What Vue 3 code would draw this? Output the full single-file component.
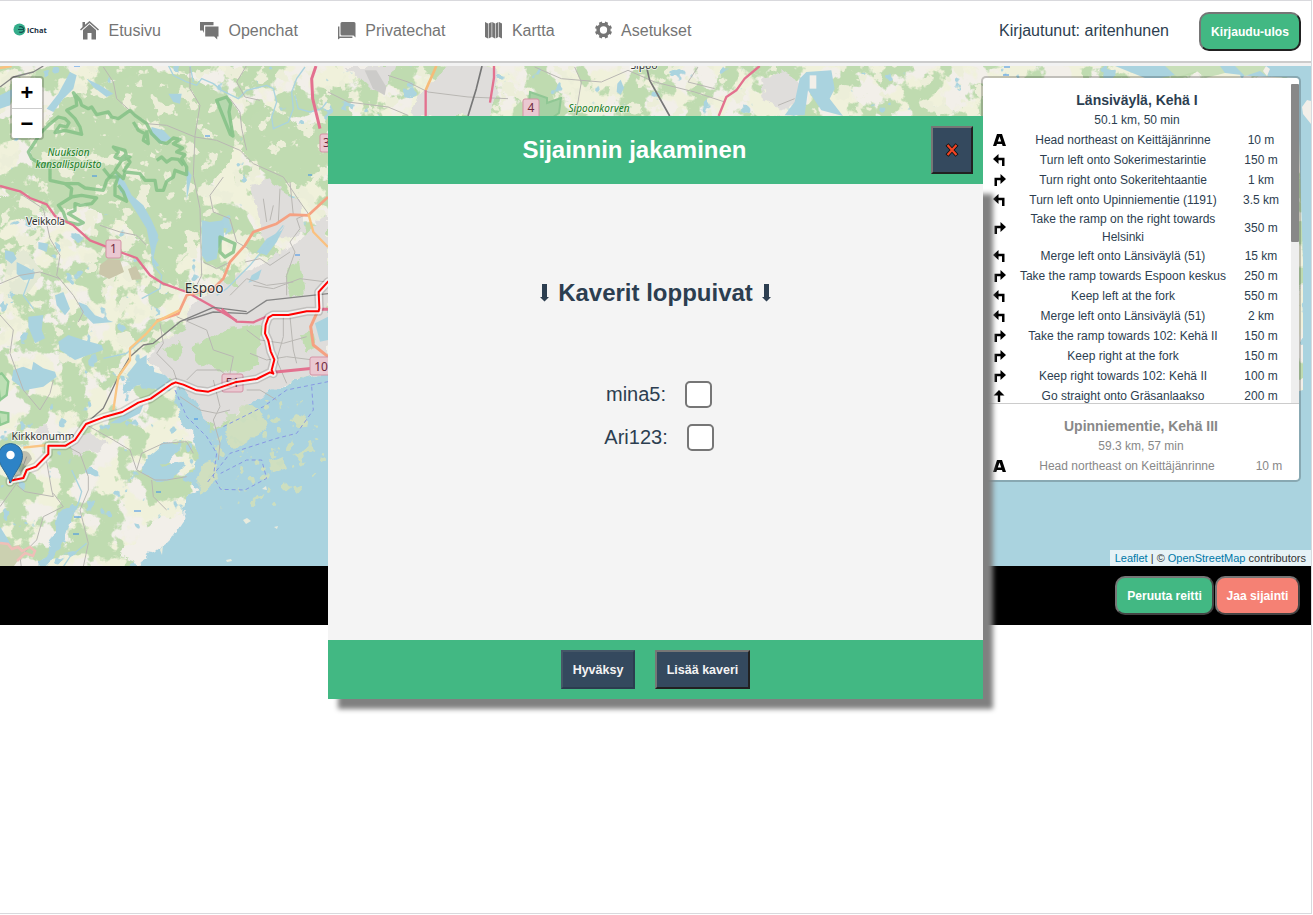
<script setup>
const steps = [
  ['A', 'Head northeast on Keittäjänrinne', '10 m'],
  ['left', 'Turn left onto Sokerimestarintie', '150 m'],
  ['right', 'Turn right onto Sokeritehtaantie', '1 km'],
  ['left', 'Turn left onto Upinniementie (1191)', '3.5 km'],
  ['right', 'Take the ramp on the right towards Helsinki', '350 m'],
  ['left', 'Merge left onto Länsiväylä (51)', '15 km'],
  ['right', 'Take the ramp towards Espoon keskus', '250 m'],
  ['left', 'Keep left at the fork', '550 m'],
  ['left', 'Merge left onto Länsiväylä (51)', '2 km'],
  ['right', 'Take the ramp towards 102: Kehä II', '150 m'],
  ['right', 'Keep right at the fork', '150 m'],
  ['right', 'Keep right towards 102: Kehä II', '100 m'],
  ['up', 'Go straight onto Gräsanlaakso', '200 m'],
]
const routes = [
  { title: 'Länsiväylä, Kehä I', info: '50.1 km, 50 min', steps },
  { title: 'Upinniementie, Kehä III', info: '59.3 km, 57 min', steps: steps.slice(0, 1) },
]
const glyphs = {
  A: 'M0 12 4 0h5L13 12H9.600L9 10H4L3.300 12ZM4.800 7.500h3.400L6.500 2.400Z',
  left: 'M0 5 5.500 0V3.700h6V12H9V6.300H5.500V10Z',
  right: 'M13 5 7.500 0V3.700h-6V12H4V6.300h3.500V10Z',
  up: 'M6 0l5.500 5.500H7.200V12H4.800V5.500H.500Z',
}
const routeLine = 'M30 517 30 512 70 504 80 480 108 470 145 432 145 407 197 407 225 390 258 342 310 322 367 306 415 278 452 266 515 222 527 217 550 224 590 241 625 245 705 217 770 207 810 187 820 191 815 180 823 149 812 124 805 92 795 70 797 45 805 23 818 15 865 15 920 4 956 4 958-6 956-54 984-85'
</script>

<template>
  <div class="page">
    <nav class="nav">
      <div class="logo">
        <svg width="13" height="13" viewBox="0 0 13 13">
          <circle cx="6.500" cy="6.500" r="6" fill="#35ad8b" />
          <path d="M6 4c2-1 4 0 5 2M6 9c2 1 5 0 5-2M5 6.500h6" stroke="#144d50" stroke-width="1.200" fill="none" />
        </svg>
        <span>iChat</span>
      </div>
      <a class="item">
        <svg width="19" height="19" viewBox="0 0 19 19"><path d="M9.500 0 19 8.500l-1 1L9.500 2 1 9.500l-1-1L2.500 6V1H5v2.800ZM9.500 3.300 16 9v9.500h-4.500V12h-4v6.500H3V9Z" /></svg>Etusivu</a>
      <a class="item">
        <svg width="19" height="19" viewBox="0 0 19 19"><path d="M0 1h13.500v3.300H4V12L2.800 9.500H0Z" /><path d="M5.200 5.500H18.500v10h-1.300V18.500l-3-3h-9Z" /></svg>Openchat</a>
      <a class="item">
        <svg width="19" height="19" viewBox="0 0 19 19"><path d="M5 1h12q1.500 0 1.500 1.500V16.500L16.500 14.500H5q-1.500 0-1.500-1.500V2.500Q3.500 1 5 1Z" /><path d="M1 5.500h1.400V15.500h13V17H3L1 18.500Z" /></svg>Privatechat</a>
      <a class="item map-item">
        <svg width="17" height="18" viewBox="0 0 17 18"><path d="m0 1 3 1.500v15L0 16Zm3.600 1.500L6.600 1v15L3.600 17.500ZM7.200 1 10 2.500v15L7.200 16Zm3.400 1.500L13.400 1v15l-2.800 1.500ZM14 1l3 1.500v15L14 16Z" /></svg>Kartta</a>
      <a class="item">
        <svg width="17" height="18" viewBox="0 0 20 20"><path fill-rule="evenodd" d="m8 0 .6 1.700h2.800L12 0l3.500 1.500-.7 1.700 2 2 1.700-.700L20 8l-1.700.600v2.800L20 12l-1.500 3.500-1.700-.700-2 2 .7 1.700L12 20l-.6-1.700H8.600L8 20l-3.500-1.500.7-1.700-2-2-1.700.700L0 12l1.700-.6V8.600L0 8l1.500-3.500 1.700.700 2-2-.7-1.700ZM10 5.700a4.300 4.300 0 1 0 0 8.600 4.300 4.300 0 0 0 0-8.600Z" /></svg>Asetukset</a>
      <span class="user">Kirjautunut: aritenhunen</span>
      <button class="round green">Kirjaudu-ulos</button>
    </nav>

    <section class="map">
      <svg class="tiles" width="1311" height="500" viewBox="0 66 1311 500">
        <defs>
          <filter id="forest" x="0" y="0" width="100%" height="100%" color-interpolation-filters="sRGB">
            <feTurbulence type="fractalNoise" baseFrequency=".034" numOctaves="5" seed="8" />
            <feColorMatrix values="0 0 0 0 .75  0 0 0 0 .86  0 0 0 0 .69  18 0 0 0 -8.600" />
            <feComposite in2="SourceGraphic" operator="in" />
          </filter>
          <filter id="clearings" x="0" y="0" width="100%" height="100%" color-interpolation-filters="sRGB">
            <feTurbulence type="fractalNoise" baseFrequency=".06" numOctaves="4" seed="31" />
            <feColorMatrix values="0 0 0 0 .925  0 0 0 0 .935  0 0 0 0 .85  0 20 0 0 -12" />
            <feComposite in2="SourceGraphic" operator="in" />
          </filter>
          <filter id="fields" x="0" y="0" width="100%" height="100%" color-interpolation-filters="sRGB">
            <feTurbulence type="fractalNoise" baseFrequency=".028" numOctaves="4" seed="21" />
            <feColorMatrix values="0 0 0 0 .94  0 0 0 0 .945  0 0 0 0 .86  0 16 0 0 -7.500" />
            <feComposite in2="SourceGraphic" operator="in" />
          </filter>
          <filter id="lakes" x="0" y="0" width="100%" height="100%" color-interpolation-filters="sRGB">
            <feTurbulence type="fractalNoise" baseFrequency=".06" numOctaves="3" seed="5" />
            <feColorMatrix values="0 0 0 0 .67  0 0 0 0 .83  0 0 0 0 .875  0 0 22 0 -15.500" />
            <feComposite in2="SourceGraphic" operator="in" />
          </filter>
          <filter id="rough" x="-5%" y="-5%" width="110%" height="110%">
            <feTurbulence type="fractalNoise" baseFrequency=".07" numOctaves="3" seed="3" />
            <feDisplacementMap in="SourceGraphic" scale="13" xChannelSelector="R" yChannelSelector="G" />
          </filter>
          <filter id="islands" x="0" y="0" width="100%" height="100%" color-interpolation-filters="sRGB">
            <feTurbulence type="fractalNoise" baseFrequency=".085" numOctaves="3" seed="14" />
            <feColorMatrix values="0 0 0 0 .8  0 0 0 0 .87  0 0 0 0 .75  22 0 0 0 -14" />
            <feComposite in2="SourceGraphic" operator="in" />
          </filter>
        </defs>
        <rect y="66" width="1311" height="500" fill="#f2efe9" />
        <rect y="66" width="1311" height="500" filter="url(#fields)" />
        <rect y="66" width="1311" height="500" filter="url(#forest)" />
        <rect y="66" width="1311" height="500" filter="url(#lakes)" />

        <!-- Forests around Nuuksio -->
        <g transform="translate(0 62) scale(.33333)" filter="url(#rough)" fill="#c0dbb1">
          <path d="M190 110 330 60 440 30 560 40 690 110 720 160 690 300 610 390 600 540 500 640 440 560 370 480 250 430 180 450 100 340 90 250Z" />
          <path d="M720 190 800 130 900 190 980 180 980 330 890 380 790 330 730 280Z" />
          <path d="M0 400 60 410 130 480 60 470 0 480Z" />
          <path d="M20 590 70 560 130 630 80 700 20 690Z" fill="#e3e8d4" />
        </g>
        <rect y="66" width="983" height="320" filter="url(#clearings)" />

        <!-- Built-up areas -->
        <g filter="url(#rough)" fill="#dfdddb">
          <path d="M190 308 215 285 250 270 285 250 328 215V372L300 376 270 397 240 410 214 428 195 410 178 385 150 360 158 345 185 330Z" />
          <path d="M250 185 270 180 300 200 305 230 265 240Z" />
          <path d="M65 438 90 430 108 445 75 458ZM30 430 45 425 55 435 40 440Z" />
          <path d="M345 66 395 66 388 85 370 90ZM448 66 497 66 492 116 410 116 420 95Z" />
          <path d="M760 80 790 70 805 90 785 110 765 100Z" />
        </g>
        <g filter="url(#rough)" fill="#c1ddb1">
          <path d="M190 350 220 330 260 325 258 365 240 374 200 365Z" />
          <path d="M220 280 235 270 238 288ZM285 275 300 260 305 295 292 300ZM165 350l12-8 5 15-10 5ZM300 335l12-6 4 16-12 4Z" />
        </g>
        <path d="m100 265 8-6 12 1 4 12-15 7-10-5ZM128 269l8-3 6 13-10 1Z" fill="#cac6aa" />

        <!-- Sea -->
        <g filter="url(#rough)">
          <path d="M120 586 136 553 155 533 180 520 188 495 199 490 185 480 198 460 193 435 185 428 178 408 173 393 183 387 196 402 211 430 225 425 238 418 245 408 264 395 282 390 301 376 345 368V600H120Z" fill="#aad3df" />
          <path d="M140 475 149 458 165 445 182 440 180 448 161 468 178 460 185 466 173 478 158 481ZM124 393 130 370 142 358 151 364 155 378 171 388 160 390 146 386Z" fill="#aad3df" />
          <path d="m40 566 14-32 5-20 12-12 5 4-7 17-11 25-11 25Z" fill="#aad3df" />
          <path d="M227 420 247 405 260 412 266 430 253 438 235 450 226 442ZM199 475 211 457 220 462 210 484 200 495ZM270 462l12-5 4 12-14 5ZM288 422l8-8 9 3-3 10Z" fill="#d0dfbf" />
          <path d="m120 555 26-28 25-12 15-2-18 27-28 22Z" fill="#f2efe9" />
        </g>
        <path d="M215 400h113v60l-40 45-88 5Z" filter="url(#islands)" />
        <g fill="#e8ebdd">
          <path d="m243 520 4-2 4 3-5 3ZM226 560l5-1 1 2-5 1ZM262 489l4-3 1 4ZM274 527l4-1-1 3ZM160 550l3-5-1 10Z" />
        </g>

        <!-- Lakes -->
        <g transform="translate(0 62) scale(.33333)" fill="#aad3df">
          <path d="M605 475 630 480 670 475 672 525 655 560 650 590 620 600 605 580Z" />
          <path d="M345 330 375 360 395 400 430 430 455 475 475 520 460 590 450 550 440 500 415 460 380 405 360 390Z" />
          <path d="M210 30 230 40 220 80 190 110 160 150 140 140 175 95ZM0 100 40 80 30 130 0 140Z" />
          <path d="M455 195 490 205 515 230 480 245 450 215ZM770 570 800 530 845 505 855 490 830 540 800 580ZM260 50 300 70 340 95 320 105 280 75Z" />
          <path d="M15 565 40 570 50 590 35 605 15 590ZM50 600 80 615 105 630 100 650 70 655 50 635ZM115 540 145 545 140 570 115 560ZM165 700 190 690 210 740 195 760 170 730ZM755 640l30-18-10 30-30 10ZM560 320l15 20-15 75Z" />
          <path d="M235 720 260 730 285 760 340 780 280 785 245 750ZM505 95l40 0-5 30-20-5Z" />
        </g>
        <g transform="translate(0 310) scale(.33333)" fill="#aad3df">
          <path d="M85 20 130 15 125 60 135 85 105 100 85 50ZM175 95 205 75 250 90 305 105 310 120 265 135 225 150 180 120ZM40 180 70 170 95 180 100 155 130 175 165 185 170 200 130 230 75 240 35 210Z" />
          <path d="M415 150 440 135 440 180 495 195 520 220 470 220 400 215 380 195ZM330 340 380 310 430 285 420 310 360 340ZM945 40 984 20V90L960 95ZM0 650 25 690 40 720 0 740Z" />
        </g>
        <g transform="translate(328 62) scale(.33333)">
          <path d="M1435 30 1510 25 1520 80 1505 110 1545 162 1480 145 1440 85 1430 160H1370L1400 120 1415 50Z" fill="#aad3df" />
          <path d="M1445 40h20v40h-20Z" fill="#f2efe9" />
          <path d="m868 65 10-12 10 25-10 20-12-8Z" fill="#aad3df" />
          <path d="m110 25 35 0 30 50 -5 25-35-20Z" fill="#cccbc9" />
        </g>
        <path d="M1115 66H1311V566H983V480l320-90V260L1297 78 1250 76 1200 70 1150 80Z" fill="#aad3df" />
        <path d="m1165 66 12 11 20-6 8 7 20-5-5-7ZM1235 66l10 10 15-5 8 6-3-11Z" fill="#c8dfb9" />
        <path d="m1302 107 5-7 4 1v23l-8-10ZM1263 71l3-5 4 3-3 7Z" fill="#f2efe9" />

        <!-- Streams and minor roads -->
        <g fill="none">
          <g transform="translate(0 62) scale(.33333)" stroke="#aad3df" stroke-width="4">
            <path d="M505 10 520 40 560 60 590 70 605 50 640 65 665 85 715 110 740 85 800 70 820 80 830 120 815 165 820 200 865 180 880 140 875 90 890 50 915 15M885 100 895 140 930 150 965 140 980 120" />
            <path d="M475 530 455 570 460 610 485 640 480 680 425 710M850 490 750 610 680 680 650 700M100 620 70 700 100 740M570 10 580 60" />
          </g>
          <g transform="translate(0 310) scale(.33333)" stroke="#aad3df" stroke-width="4">
            <path d="M215 480 245 545 235 580 205 640 175 720M310 145 380 130 435 80M260 700 210 740 190 770" />
          </g>
          <g transform="translate(0 62) scale(.33333)" stroke="#b9b7b3" stroke-width="3">
            <path d="M310 15 340 60 350 110 400 155 440 185 500 190 585 225 650 235 720 265 760 305 850 345 900 420 925 455M570 15 570 80 600 130 585 220 580 340 600 440 605 640 580 690M740 10 710 60 735 105 780 115M740 265 725 200 720 150 690 110M60 395 130 440 150 530 180 580 170 640 220 700 250 750 235 780M0 665 60 640 120 630 180 650M300 490 360 510 410 520 440 550" />
            <path d="M610 600 650 620 690 600M670 345 630 400 640 450 690 470 710 540 745 560M925 455 890 470 900 500 870 540 885 570 860 640 860 700M735 600 780 590 810 610 870 570M760 670 820 680 900 650 980 660M690 700 740 650 800 670 880 660M790 410 800 480M840 380 835 480M870 360 880 460M820 430 810 475" />
          </g>
          <g transform="translate(0 310) scale(.33333)" stroke="#b9b7b3" stroke-width="3">
            <path d="M0 15 40 60 30 130 70 240 120 300 150 250 160 210M140 455 155 540 160 560 75 545 50 525M160 550 190 590 130 620 110 690 60 740 65 780M185 400 240 430 265 500 265 540 240 600 265 700 250 770M260 345 340 390 390 420 410 480 465 510 500 510 560 500M410 480 425 430 490 400 560 395 580 430M480 40 490 100 470 130 520 180 540 240M530 20 620 60 640 120 700 140 690 190 720 220M850 20 850 80 830 150 860 220M640 210 660 290 640 330 660 400 655 450M0 590 50 520 80 440M455 510 460 560 500 600" />
            <path d="M560 210 590 180 660 180 700 215M540 260 600 300 650 310 690 300M740 240 780 240 830 270M750 130 800 150 860 140 940 150M740 60 780 90 850 100 920 80M870 20 880 120 890 160" />
          </g>
          <g transform="translate(328 62) scale(.33333)" stroke="#b9b7b3" stroke-width="3">
            <path d="M0 90 60 120 180 135 240 160M620 15 700 50 820 60 900 25 980 60 1100 90 1190 120M180 40 240 60 300 90 420 105 540 110M740 15 760 60 750 120 740 160M1350 130 1400 110M1110 15 1080 60 1160 80" />
          </g>
        </g>

        <!-- National park borders -->
        <g transform="translate(0 62) scale(.33333)" fill="none" stroke="#7fbf83" stroke-opacity=".8" stroke-width="10" stroke-linejoin="round">
          <path d="M85 270 105 240 120 215 145 190 175 165 195 170 207 182 200 195 180 190 165 212 195 205 245 217 240 195 225 170 200 145 230 130 228 110 220 92 240 115 245 130 265 140 275 135 290 158 325 150 335 165 355 170 390 145 405 160 440 185 455 215 480 240 500 245 520 228 540 232 520 245 548 258 530 270 555 278 545 290 560 315 560 338 525 325 520 345 500 358 490 385 470 385 465 355 435 355 420 335 375 330 370 350 345 328 320 355 310 385 255 378 235 365 195 365 150 355 150 310 120 305 95 290ZM195 365 215 380 212 405 245 400 290 408 275 425 240 430 225 425 225 445 205 455 250 482 235 488 200 480 190 450 175 430 215 405" />
          <path d="M345 325 365 295 390 285 375 280 360 292 345 285 355 270 340 255 375 265 380 285 390 300 370 330M470 295 485 285 500 300 515 290 535 292 550 310M400 180 415 205 435 215 430 235 445 245 440 205M310 320 330 345 355 345 345 370 345 400 380 418 370 390 355 370" />
          <path d="m650 115 30-10 12 20-5 25 12 72-8-5Z" fill="#b6d8ae" />
          <path d="m660 525 45 20-5 25-25 15-15-15Z" />
        </g>
        <g transform="translate(0 310) scale(.33333)" stroke="#8fca92" stroke-width="7" fill="#bde0b5"><path d="M-8 195 5 190 25 215 20 255 0 270ZM-5 305 25 310 25 335 0 345Z" /></g>
        <path d="m0 543 8 0 4 3 8-1 4 7-10 14H0Z" fill="#cbd0b0" />
        <path d="m0 543 8 1 4 5 6-2 4 4 8-4 5 4-2 5-8-3-8 8" fill="none" stroke="#efbfb8" stroke-width="2.500" />
        <path d="m530 92 17 6v5l14-5-2 15-10 7-21-5Z" fill="#a5d1a3" stroke="#90c794" stroke-width="2" />

        <!-- Railways and main roads -->
        <g fill="none" stroke-linejoin="round">
          <g transform="translate(0 62) scale(.33333)">
            <path d="M0 75 40 45 100 30 130 12M560 775 640 750 740 755 800 715 984 695" stroke="#858585" stroke-width="4" />
            <path d="M0 372 60 388 90 408 140 427 165 462 220 490 270 535 360 570 410 588 450 640 490 665 560 690 640 735 710 776" stroke="#e3718f" stroke-width="7" />
            <path d="M948 12 935 50 938 110 960 200M958 742 984 742" stroke="#e3718f" stroke-width="9" />
            <path d="M470 776 535 755 560 700 640 680 670 650 690 600 735 550 760 510 830 485 870 458 925 460 984 405" stroke="#f5a182" stroke-width="8" />
            <path d="M925 455 940 510 984 555M0 18 35 12" stroke="#fac17f" stroke-width="7" />
          </g>
          <g transform="translate(0 310) scale(.33333)">
            <path d="M270 330 310 295 355 200 390 140 430 105 460 100 540 35 640-8 740 5" stroke="#7f7f7f" stroke-width="4" />
            <path d="M340 300 355 200 390 150 390 115 440 70 470 35 540 0M70 413 145 405" stroke="#fac583" stroke-width="7" />
            <path d="M665-3 710 35 760 37 810 15" stroke="#e3718f" stroke-width="7" />
            <path d="M820 187 984 170" stroke="#e3718f" stroke-width="9" />
            <path d="M950 10 932 50 940 105 984 140" stroke="#f5a182" stroke-width="9" />
            <g stroke="#8798e3" stroke-width="3" stroke-dasharray="12 9"><path d="M525 240 560 320 620 380 650 430 640 500 662 538 735 540 800 505 785 450 740 450 662 490M670 350 790 290 860 240 984 215M935 230 940 300 890 370 830 385 690 430 620 520" /></g>
          </g>
          <g transform="translate(328 62) scale(.33333)">
            <path d="M462 12 445 80 420 162M955 12 965 55 1025 162" stroke="#777" stroke-width="5" />
            <path d="M325 12 293 85" stroke="#f6bb79" stroke-width="8" />
            <path d="M293 85v77M498 12v35l-12 75M1295 12 1250 50 1225 85 1195 105 1172 162" stroke="#e3718f" stroke-width="7" />
          </g>
          <path d="m1003 75h6m-5-8h6M74 66h6m125 70h5m98 39h4m-17 80h5M74 517h7m-8 17h6m77-42h5m-27 19h7m53-92h4M92 176h5" stroke="#398eea" />
        </g>

        <g class="shields">
          <rect x="106" y="240" width="15" height="18" rx="2" /><text x="113.500" y="253">1</text>
          <rect x="320" y="134" width="20" height="18" rx="2" /><text x="326.500" y="147">3</text>
          <rect x="523" y="99" width="16" height="19" rx="2" /><text x="531" y="112">4</text>
          <rect x="222" y="374" width="21" height="18" rx="2" /><text x="232.500" y="387">51</text>
          <rect x="310" y="357" width="27" height="18" rx="2" /><text x="321" y="370.500">10</text>
        </g>
        <g class="places">
          <text x="204" y="293" class="city">Espoo</text>
          <text x="45.500" y="225" textLength="39">Veikkola</text>
          <text x="43" y="440" textLength="63">Kirkkonumm</text>
          <text x="644" y="69" textLength="27">Sipoo</text>
          <g class="park"><text x="68.500" y="156" textLength="42">Nuuksion</text><text x="68.500" y="168" textLength="66">kansallispuisto</text><text x="599" y="112" textLength="61">Sipoonkorven</text></g>
        </g>
        <g transform="translate(0 310) scale(.33333)" fill="none" stroke-linejoin="round" stroke-linecap="round">
          <path class="halo" :d="routeLine" />
          <path class="casing" :d="routeLine" />
          <path class="line" :d="routeLine" />
        </g>
        <path d="M13 482 32 459Q29 448 20 452Z" fill="#000" opacity=".2" />
        <path d="M10.500 483C7 472-1.500 466-1.500 455.500a12 12 0 0 1 24 0c0 10.500-8.500 16.500-12 27.500Z" fill="#2d83c6" stroke="#2e6c97" />
        <circle cx="10.500" cy="455" r="4.200" fill="#fff" />
      </svg>

      <div class="zoom"><button>+</button><button>−</button></div>

      <aside class="directions">
        <article v-for="(r, i) in routes" :key="r.title" :class="['route', { alt: i }]">
          <div class="route-body">
            <h2>{{ r.title }}</h2>
            <h3>{{ r.info }}</h3>
            <div v-for="(s, n) in r.steps" :key="n" class="step">
              <svg width="13" height="13" viewBox="0 0 13 13"><path fill-rule="evenodd" :d="glyphs[s[0]]" /></svg>
              <span>{{ s[1] }}</span><span>{{ s[2] }}</span>
            </div>
          </div>
          <div v-if="!i" class="bar"><i></i></div>
        </article>
      </aside>
      <div class="credit"><a>Leaflet</a> | © <a>OpenStreetMap</a> contributors</div>
    </section>

    <div class="actions">
      <button class="round green">Peruuta reitti</button>
      <button class="round coral">Jaa sijainti</button>
    </div>

    <div class="modal">
      <header>
        <h1>Sijainnin jakaminen</h1>
        <button class="square close"><svg width="14" height="14" viewBox="0 0 14 14"><path d="m2 1.500 10 11M12 1.500l-10 11" stroke="#111" stroke-width="4" /><path d="m2.500 2 9 10M11.500 2l-9 10" stroke="#f04424" stroke-width="2.200" /></svg></button>
      </header>
      <div class="sheet">
        <main>
          <h2>
            <svg width="9" height="18" viewBox="0 0 9 18"><path d="M2 0h5v13h2l-4.500 4.500L0 13h2Z" /></svg>
            <span>Kaverit loppuivat</span>
            <svg width="9" height="18" viewBox="0 0 9 18"><path d="M2 0h5v13h2l-4.500 4.500L0 13h2Z" /></svg>
          </h2>
          <label>mina5:<i></i></label>
          <label>Ari123:<i></i></label>
        </main>
        <footer>
          <button class="square muted">Hyväksy</button>
          <button class="square">Lisää kaveri</button>
        </footer>
      </div>
    </div>
  </div>
</template>

<style>
body { margin: 0; overflow: hidden; background: #fff; }
</style>
<style scoped>
* { box-sizing: border-box; }
.page { position: relative; width: 1312px; height: 914px; border: solid #d9d9dd; border-width: 1px 1px 1px 0; font-family: "Liberation Sans", Arial, sans-serif; color: #2c3e50; }
h1, h2, h3 { margin: 0; }
button { font: bold 12.500px "Liberation Sans", Arial, sans-serif; padding: 0; white-space: nowrap; flex: none; }
.nav { height: 65px; padding: 0 10px 5px 13px; display: flex; align-items: center; background: linear-gradient(#fff 60px, #ccc 60px, #ccc 62px, #f2f2f2 62px); }
.logo { width: 67px; display: flex; align-items: center; font: bold 7.500px "Noto Sans", sans-serif; color: #234; padding-bottom: 3px; }
.logo span { margin-left: 1px; }
.item { display: flex; align-items: center; gap: 9.500px; margin-right: 39px; font-size: 16px; color: #757575; }
.item svg { fill: #757575; flex: none; margin-top: -2px; }
.map-item { margin-left: 1px; margin-right: 40px; }
.user { margin-left: auto; margin-right: 30px; font-size: 16px; }
.round { height: 39px; border: 2px solid; border-color: #767676 #212121 #212121 #767676; border-radius: 10px; color: #fff; font-size: 12.100px; }
.green { background: #42b883; }
.coral { background: #f58174; }
.nav .round { width: 102px; margin-top: 1px; }
.map { position: relative; height: 500px; overflow: hidden; }
.tiles { display: block; }
.shields rect { fill: #eac8d1; stroke: #d493a5; }
.shields text { font: 12px "Noto Sans", sans-serif; fill: #712b40; text-anchor: middle; }
.places text { font: 10.500px "Noto Sans", sans-serif; fill: #333; text-anchor: middle; paint-order: stroke; stroke: #fffa; stroke-width: 2px; }
.places .city { font-size: 13.500px; }
.places .park text { font-size: 10px; font-style: italic; fill: #167b24; stroke: #fff5; }
.halo { stroke: #0002; stroke-width: 27; }
.casing { stroke: #fffc; stroke-width: 18; }
.line { stroke: #f00; stroke-width: 6; }
.zoom { position: absolute; left: 10px; top: 10px; border: 2px solid #0003; border-radius: 4px; overflow: hidden; background-clip: padding-box; display: grid; }
.zoom button { width: 30px; height: 30px; border: 0; background: #fff; font: bold 22px/30px "Liberation Sans", sans-serif; color: #000; }
.zoom button + button { border-top: 1px solid #ccc; line-height: 28px; }
.directions { position: absolute; left: 981px; top: 10px; width: 320px; height: 406px; border: 2px solid #0003; border-radius: 5px; background: #fff; background-clip: padding-box; text-align: center; font-size: 12px; }
.route { display: flex; height: 326px; border-bottom: 1px solid #ccc; overflow: hidden; }
.route-body { flex: 1; padding: 13px 10px 0; }
.route h2 { font-size: 14px; line-height: 18px; }
.route h3 { font-size: 12px; font-weight: normal; line-height: 18px; margin: 2px 0 1px; }
.step { display: grid; grid-template-columns: 26px 208px 1fr; align-items: center; min-height: 20px; line-height: 18px; }
.step span:last-child { margin-right: -14px; }
.alt { height: 76px; border: 0; color: #888; }
.alt .step { grid-template-columns: 26px 216px 1fr; }
.alt .step span:last-child { margin-right: -14px; }
.bar { width: 8px; margin-top: 6px; background: #eee; }
.bar i { display: block; height: 158px; background: #888; border-radius: 1px; }
.credit { position: absolute; right: 0; bottom: 0; padding: 0 5px; background: #ffffffb3; font-size: 11px; line-height: 16px; color: #333; white-space: nowrap; }
.credit a { color: #0078a8; }
.actions { height: 59px; background: #000; display: flex; justify-content: flex-end; align-items: center; padding-right: 11px; gap: 1px; }
.actions .round { border-color: #767676 #444 #444 #767676; }
.actions .green { width: 99px; }
.actions .coral { width: 85px; }
.modal { position: absolute; left: 328px; top: 115px; width: 655px; height: 583px; display: flex; flex-direction: column; }
.modal header { height: 68px; background: #42b883; display: flex; align-items: center; padding: 0 10px; }
.modal h1 { flex: 1; text-align: center; font-size: 24px; color: #fff; }
.sheet { flex: 1; display: flex; flex-direction: column; background: #f4f4f4; box-shadow: 10px 10px 5px #808080; }
.square { height: 39px; border: 2px solid; border-color: #767676 #212121 #212121 #767676; background: #34495e; color: #f4f4f4; }
.close { width: 42px; height: 48px; display: grid; place-items: center; }
.modal main { flex: 1; display: flex; flex-direction: column; align-items: center; padding-top: 94px; }
.modal main h2 { display: flex; align-items: center; gap: 9px; font-size: 24px; line-height: 30px; margin-bottom: 71px; white-space: nowrap; }
.modal h2 svg { fill: #2c3e50; }
.modal label { display: flex; align-items: center; gap: 19px; height: 30px; margin-bottom: 13px; font-size: 20px; padding-left: 7px; }
.modal label i { width: 27px; height: 27px; border: 2px solid #767676; border-radius: 5px; background: #fff; }
.modal footer { height: 59px; background: #42b883; display: flex; align-items: center; justify-content: center; gap: 20px; }
.modal footer .square { width: 95px; }
.modal footer .muted { width: 74px; border-color: #455767 #2b3d4f #2b3d4f #455767; }
</style>
